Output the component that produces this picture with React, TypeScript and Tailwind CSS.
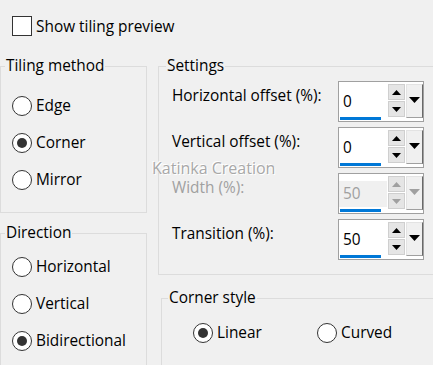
import React from "react";

type SpinProps = { value: string; disabled?: boolean };

const Tri = ({ dir, w, h, color }: { dir: "up" | "down"; w: number; h: number; color: string }) => (
  <svg width={w} height={h} viewBox={`0 0 ${w} ${h}`}>
    {dir === "up" ? (
      <polygon points={`0,${h} ${w},${h} ${w / 2},0`} fill={color} />
    ) : (
      <polygon points={`0,0 ${w},0 ${w / 2},${h}`} fill={color} />
    )}
  </svg>
);

const SpinBox: React.FC<SpinProps> = ({ value, disabled }) => {
  const arrow = disabled ? "#a0a0a0" : "#000000";
  return (
    <div className="w-[86px] h-[41px] border border-[#a0a0a0] bg-white flex">
      <div className="w-[48px] flex flex-col pt-[7px]">
        <div
          className={`h-[26px] flex items-center pl-[4px] ${
            disabled ? "bg-[#f0f0f0] text-[#a0a0a0]" : "text-black"
          }`}
        >
          {value}
        </div>
        <div className="mt-[2px] ml-[1px] w-[41px] h-[3px] bg-[#0078d7]" />
      </div>
      <div className="ml-[1px] mt-[2px] w-[17px] flex flex-col gap-[1px]">
        <div className="h-[16px] bg-[#e5e5e5] border border-[#cfcfcf] flex items-center justify-center">
          <Tri dir="up" w={9} h={5} color={arrow} />
        </div>
        <div className="h-[16px] bg-[#e5e5e5] border border-[#cfcfcf] flex items-center justify-center">
          <Tri dir="down" w={9} h={5} color={arrow} />
        </div>
      </div>
      <div className="ml-[1px] mt-[2px] w-[17px] h-[34px] bg-[#f0f0f0] border border-[#e3e3e3] border-r-[#696969] border-b-[#a0a0a0] flex justify-center pt-[12px]">
        <Tri dir="down" w={11} h={6} color={arrow} />
      </div>
    </div>
  );
};

const Radio = ({ checked }: { checked?: boolean }) => (
  <div className="w-[20px] h-[20px] rounded-full border border-[#333333] bg-white flex items-center justify-center shrink-0">
    {checked && <div className="w-[10px] h-[10px] rounded-full bg-[#333333]" />}
  </div>
);

const RadioRow = ({ label, checked }: { label: string; checked?: boolean }) => (
  <div className="flex items-center gap-[4px] h-[20px]">
    <Radio checked={checked} />
    <span>{label}</span>
  </div>
);

const SettingRow = ({ label, value, disabled }: { label: string; value: string; disabled?: boolean }) => (
  <div className="flex items-start">
    <div className={`w-[172px] pl-[6px] mt-[5px] leading-[20px] ${disabled ? "text-[#a0a0a0]" : ""}`}>
      {label}
    </div>
    <SpinBox value={value} disabled={disabled} />
  </div>
);

export default function App() {
  return (
    <div className="relative w-[433px] h-[365px] overflow-hidden bg-[#f0f0f0] text-black text-[15.4px] leading-[20px] font-['Open_Sans',sans-serif]">
      <div className="pt-[16px] pl-[12px] flex items-center gap-[4px] h-[36px]">
        <div className="w-[20px] h-[20px] border border-[#333333] bg-white" />
        <span className="mt-[1px]">Show tiling preview</span>
      </div>

      <div className="flex mt-[20px]">
        <div className="w-[147px] shrink-0 flex flex-col">
          <fieldset className="border border-[#dcdcdc] pl-[4px] h-[157px]">
            <legend className="px-[1px] leading-[20px]">Tiling method</legend>
            <div className="ml-[7px] mt-[20px] flex flex-col gap-[17px]">
              <RadioRow label="Edge" />
              <RadioRow label="Corner" checked />
              <RadioRow label="Mirror" />
            </div>
          </fieldset>
          <fieldset className="mt-[10px] border border-[#dcdcdc] pl-[4px] h-[200px]">
            <legend className="px-[1px] leading-[20px]">Direction</legend>
            <div className="ml-[7px] mt-[14px] flex flex-col gap-[17px]">
              <RadioRow label="Horizontal" />
              <RadioRow label="Vertical" />
              <RadioRow label="Bidirectional" checked />
            </div>
          </fieldset>
        </div>

        <div className="ml-[11px] flex flex-col shrink-0">
          <fieldset className="border border-[#dcdcdc] pl-[7px] w-[290px] h-[219px]">
            <legend className="px-[1px] leading-[20px]">Settings</legend>
            <div className="mt-[5px] flex flex-col gap-[5px]">
              <SettingRow label="Horizontal offset (%):" value="0" />
              <SettingRow label="Vertical offset (%):" value="0" />
              <SettingRow label="Width (%):" value="50" disabled />
              <SettingRow label="Transition (%):" value="50" />
            </div>
          </fieldset>
          <fieldset className="ml-[3px] mt-[13px] border border-[#dcdcdc] pl-[6px] w-[290px] h-[120px]">
            <legend className="px-[1px] leading-[20px]">Corner style</legend>
            <div className="ml-[25px] mt-[15px] flex items-center">
              <div className="w-[124px]">
                <RadioRow label="Linear" checked />
              </div>
              <RadioRow label="Curved" />
            </div>
          </fieldset>
        </div>
      </div>

      <div className="absolute left-[152px] top-[158px] text-[16px] leading-[20px] text-[#a8a8a8] [text-shadow:1px_1px_0_#ffffff,-1px_-1px_0_#ffffff]">
        Katinka Creation
      </div>
    </div>
  );
}
